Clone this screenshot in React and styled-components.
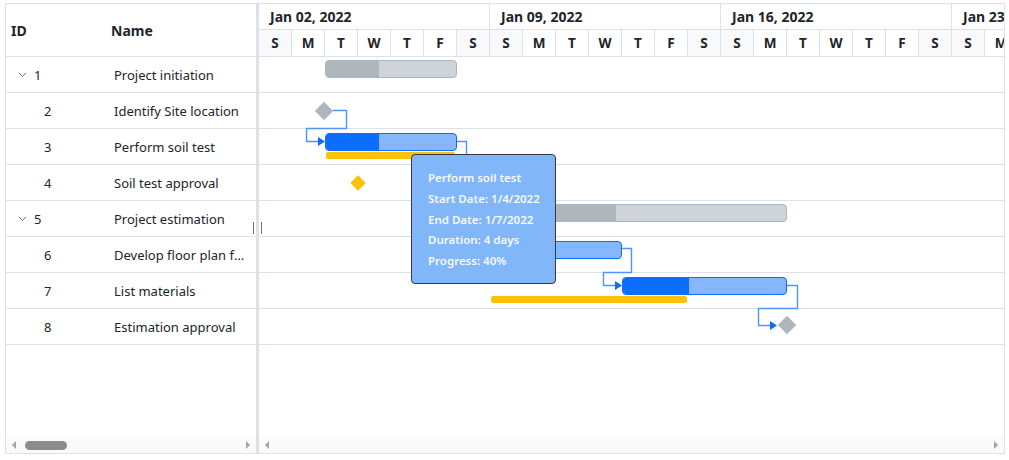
import styled, { createGlobalStyle } from 'styled-components'

const GlobalStyle = createGlobalStyle`
  html, body { margin: 0; background: #fff; }
  body {
    padding: 3px 5px;
    font-family: "Noto Sans", "Open Sans", sans-serif;
    color: #212529;
  }
  * { box-sizing: border-box; }
`

const DAY = 33
const ROW = 36

const rows = [
  { id: 1, name: 'Project initiation', parent: true },
  { id: 2, name: 'Identify Site location' },
  { id: 3, name: 'Perform soil test' },
  { id: 4, name: 'Soil test approval' },
  { id: 5, name: 'Project estimation', parent: true },
  { id: 6, name: 'Develop floor plan for estimation' },
  { id: 7, name: 'List materials' },
  { id: 8, name: 'Estimation approval' },
]

// chart items, x in px from chart origin
const items = [
  [{ type: 'summary', left: 66, width: 132, progress: 53 }],
  [{ type: 'milestone', x: 65, y: 17.5 }],
  [{ type: 'baseline', left: 67, width: 129 }, { type: 'task', left: 66, width: 132, progress: 53 }],
  [{ type: 'basemilestone', x: 99, y: 18 }, { type: 'milestone', x: 198, y: 18 }],
  [{ type: 'summary', left: 231, width: 297, progress: 125 }],
  [{ type: 'task', left: 231, width: 132, progress: 53 }],
  [{ type: 'baseline', left: 232, width: 196 }, { type: 'task', left: 363, width: 165, progress: 66 }],
  [{ type: 'milestone', x: 527.5, y: 16 }],
]

const connectors = [
  { d: 'M74 53.5 H87.5 V71.5 H47.5 V84.5 H60', tip: [66, 84.5] },
  { d: 'M198 84.5 H207.5 V107.5 H178.5 V126.5 H183', tip: [189, 126.5] },
  { d: 'M207 126.5 H216.5 V143.5 H220.5 V155.5 H225', tip: [231, 155.5] },
  { d: 'M363 191.5 H372.5 V215.5 H344.5 V228.5 H357', tip: [363, 228.5] },
  { d: 'M528 228.5 H538.5 V251.5 H499.5 V268.5 H512', tip: [518, 268.5] },
]

const weeks = ['Jan 02, 2022', 'Jan 09, 2022', 'Jan 16, 2022', 'Jan 23, 2022']
const days = Array.from({ length: 28 }, (_, i) => 'SMTWTFS'[i % 7])

const tooltipLines = ['Perform soil test', 'Start Date: 1/4/2022', 'End Date: 1/7/2022', 'Duration: 4 days', 'Progress: 40%']

function Chevron() {
  return (
    <svg width="9" height="6" viewBox="0 0 9 6">
      <polyline points="1,1 4.5,4.5 8,1" fill="none" stroke="#6c757d" strokeWidth="1" />
    </svg>
  )
}

function ChartItem({ item }) {
  if (item.type === 'summary') {
    return (
      <SummaryBar style={{ left: item.left, width: item.width }}>
        <SummaryProgress style={{ width: item.progress }} />
      </SummaryBar>
    )
  }
  if (item.type === 'task') {
    return (
      <TaskBar style={{ left: item.left, width: item.width }}>
        <TaskProgress style={{ width: item.progress }} />
      </TaskBar>
    )
  }
  if (item.type === 'baseline') {
    return <Baseline style={{ left: item.left, width: item.width }} />
  }
  return <Diamond baseline={item.type === 'basemilestone'} style={{ left: item.x, top: item.y }} />
}

export default function App() {
  return (
    <>
      <GlobalStyle />
      <Gantt>
        <GridPane>
          <GridHeader>
            <HeadCell width={100}>ID</HeadCell>
            <HeadCell>Name</HeadCell>
          </GridHeader>
          <Body>
            {rows.map(r => (
              <GridRow key={r.id}>
                <IdCell parent={r.parent}>
                  {r.parent && <Chevron />}
                  <span>{r.id}</span>
                </IdCell>
                <NameCell>{r.name}</NameCell>
              </GridRow>
            ))}
          </Body>
          <Scrollbar>
            <Arrow />
            <Thumb />
            <Spacer />
            <Arrow right />
          </Scrollbar>
        </GridPane>
        <Splitter>
          <Handle />
        </Splitter>
        <ChartPane>
          <TopTier>
            {weeks.map(w => <WeekCell key={w}>{w}</WeekCell>)}
          </TopTier>
          <BottomTier>
            {days.map((d, i) => <DayCell key={i} weekend={i % 7 === 0 || i % 7 === 6}>{d}</DayCell>)}
          </BottomTier>
          <ChartBody>
            {items.map((list, i) => (
              <ChartRow key={i}>
                {list.map((it, j) => <ChartItem key={j} item={it} />)}
              </ChartRow>
            ))}
            <Lines width="745" height="380">
              {connectors.map((c, i) => (
                <g key={i}>
                  <path d={c.d} fill="none" stroke="#4f94fc" strokeWidth="1.4" />
                  <polygon
                    points={`${c.tip[0] - 7},${c.tip[1] - 4.5} ${c.tip[0]},${c.tip[1]} ${c.tip[0] - 7},${c.tip[1] + 4.5}`}
                    fill="#0d6efd"
                  />
                </g>
              ))}
            </Lines>
            <Tooltip>
              {tooltipLines.map(t => <p key={t}>{t}</p>)}
            </Tooltip>
          </ChartBody>
          <Scrollbar>
            <Arrow />
            <Spacer />
            <Arrow right />
          </Scrollbar>
        </ChartPane>
      </Gantt>
    </>
  )
}

const Gantt = styled.div`
  width: 1000px;
  height: 451px;
  border: 1px solid #dee2e6;
  display: flex;
  background: #fff;
`

const GridPane = styled.div`
  width: 250px;
  flex-shrink: 0;
  display: flex;
  flex-direction: column;
`

const GridHeader = styled.div`
  height: 53px;
  display: flex;
  align-items: center;
  border-bottom: 1px solid #dee2e6;
  font-size: 14px;
  font-weight: 700;
`

const HeadCell = styled.div`
  width: ${p => (p.width ? `${p.width}px` : 'auto')};
  flex: ${p => (p.width ? 'none' : '1')};
  padding-left: 5px;
`

const Body = styled.div`
  flex: 1;
  overflow: hidden;
  position: relative;
`

const GridRow = styled.div`
  height: ${ROW}px;
  display: flex;
  align-items: center;
  border-bottom: 1px solid #dee2e6;
  font-size: 13px;
`

const IdCell = styled.div`
  width: 100px;
  flex-shrink: 0;
  display: flex;
  align-items: center;
  gap: 7px;
  padding-left: ${p => (p.parent ? '12px' : '38px')};
`

const NameCell = styled.div`
  flex: 1;
  min-width: 0;
  padding: 0 8px;
  white-space: nowrap;
  overflow: hidden;
  text-overflow: ellipsis;
`

const Scrollbar = styled.div`
  height: 16px;
  flex-shrink: 0;
  background: #fafafa;
  display: flex;
  align-items: center;
  padding: 0 6px;
`

const Arrow = styled.div`
  width: 0;
  height: 0;
  border-top: 4px solid transparent;
  border-bottom: 4px solid transparent;
  ${p => (p.right ? 'border-left: 4px solid #a3a3a3;' : 'border-right: 4px solid #a3a3a3;')}
`

const Thumb = styled.div`
  width: 42px;
  height: 9px;
  margin-left: 9px;
  border-radius: 5px;
  background: #8c8c8c;
`

const Spacer = styled.div`
  flex: 1;
`

const Splitter = styled.div`
  width: 3px;
  flex-shrink: 0;
  background: #dee2e6;
  position: relative;
`

const Handle = styled.div`
  position: absolute;
  top: 218px;
  left: -3px;
  width: 9px;
  height: 12px;
  border-left: 1px solid #6c757d;
  border-right: 1px solid #6c757d;
`

const ChartPane = styled.div`
  flex: 1;
  min-width: 0;
  display: flex;
  flex-direction: column;
  overflow: hidden;
`

const TopTier = styled.div`
  height: 26px;
  display: flex;
  border-bottom: 1px solid #dee2e6;
`

const WeekCell = styled.div`
  width: ${DAY * 7}px;
  flex-shrink: 0;
  border-right: 1px solid #dee2e6;
  padding-left: 11px;
  font-size: 14px;
  font-weight: 700;
  line-height: 25px;
  white-space: nowrap;
`

const BottomTier = styled.div`
  height: 27px;
  display: flex;
  border-bottom: 1px solid #dee2e6;
`

const DayCell = styled.div`
  width: ${DAY}px;
  flex-shrink: 0;
  border-right: 1px solid #dee2e6;
  background: ${p => (p.weekend ? '#f8f9fa' : '#fff')};
  display: flex;
  align-items: center;
  justify-content: center;
  font-size: 13.5px;
  font-weight: 700;
`

const ChartBody = styled.div`
  flex: 1;
  position: relative;
  overflow: hidden;
`

const ChartRow = styled.div`
  height: ${ROW}px;
  border-bottom: 1px solid #dee2e6;
  position: relative;
`

const SummaryBar = styled.div`
  position: absolute;
  top: 3px;
  height: 18px;
  border: 1px solid #adb5bd;
  border-radius: 4px;
  background: #ced4da;
  overflow: hidden;
`

const SummaryProgress = styled.div`
  height: 100%;
  background: #adb5bd;
`

const TaskBar = styled.div`
  position: absolute;
  top: 4px;
  height: 18px;
  border: 1px solid #0d6efd;
  border-radius: 4px;
  background: #86b7fe;
  overflow: hidden;
`

const TaskProgress = styled.div`
  height: 100%;
  background: #0d6efd;
`

const Baseline = styled.div`
  position: absolute;
  top: 23px;
  height: 7px;
  border-radius: 2px;
  background: #ffc107;
`

const Diamond = styled.div`
  position: absolute;
  width: ${p => (p.baseline ? '11px' : '13px')};
  height: ${p => (p.baseline ? '11px' : '13px')};
  background: ${p => (p.baseline ? '#ffc107' : '#adb5bd')};
  transform: translate(-50%, -50%) rotate(45deg);
`

const Lines = styled.svg`
  position: absolute;
  left: 0;
  top: 0;
  pointer-events: none;
`

const Tooltip = styled.div`
  position: absolute;
  left: 152px;
  top: 97px;
  width: 145px;
  height: 130px;
  padding: 13px 0 0 16px;
  background: #81b6f8;
  border: 1px solid #343a40;
  border-radius: 4px;
  color: #f8f9fa;
  font-size: 11.5px;
  font-weight: 600;
  p {
    margin: 0;
    line-height: 20.75px;
    white-space: nowrap;
  }
`
